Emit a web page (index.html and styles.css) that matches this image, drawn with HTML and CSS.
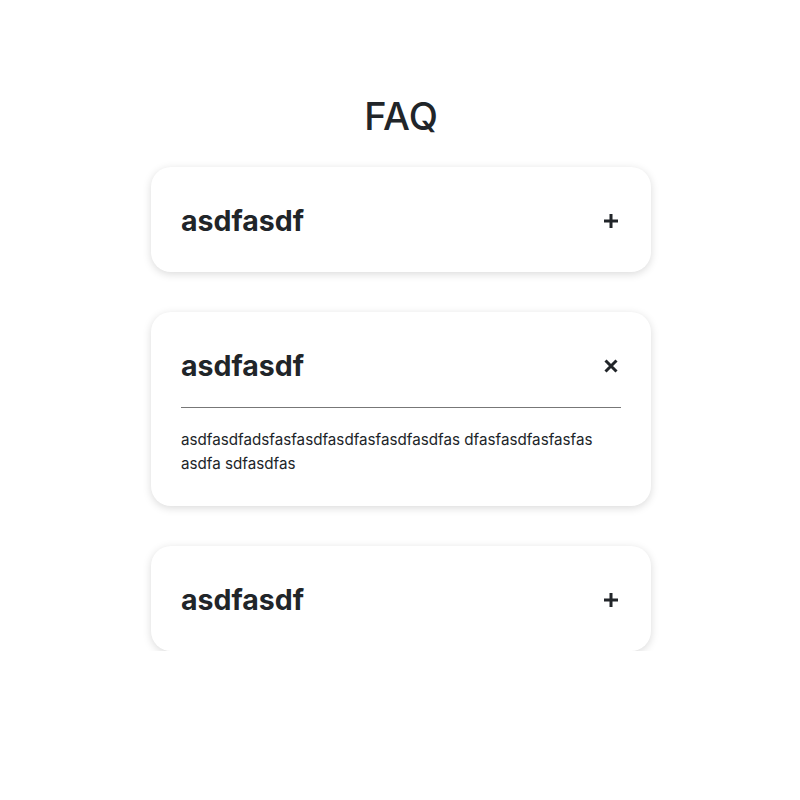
FILE: index.html
```html
<!DOCTYPE html>
<html lang="en">
<head>
<meta charset="utf-8">
<title>FAQ</title>
<link rel="stylesheet" href="styles.css">
</head>
<body>
<main class="faq">
  <h1 class="faq-title">FAQ</h1>
  <section class="card">
    <div class="card-head">
      <h2 class="card-question">asdfasdf</h2>
      <button class="toggle" aria-label="Open">
        <svg width="16" height="16" viewBox="0 0 16 16"><path d="M8 1v14M1 8h14" stroke="#212529" stroke-width="3" fill="none"/></svg>
      </button>
    </div>
  </section>
  <section class="card">
    <div class="card-head">
      <h2 class="card-question">asdfasdf</h2>
      <button class="toggle" aria-label="Close">
        <svg width="16" height="16" viewBox="0 0 16 16"><path d="M2.5 2.5l11 11M13.5 2.5l-11 11" stroke="#212529" stroke-width="3" fill="none"/></svg>
      </button>
    </div>
    <hr class="divider">
    <p class="answer">asdfasdfadsfasfasdfasdfasfasdfasdfas dfasfasdfasfasfas asdfa sdfasdfas</p>
  </section>
  <section class="card">
    <div class="card-head">
      <h2 class="card-question">asdfasdf</h2>
      <button class="toggle" aria-label="Open">
        <svg width="16" height="16" viewBox="0 0 16 16"><path d="M8 1v14M1 8h14" stroke="#212529" stroke-width="3" fill="none"/></svg>
      </button>
    </div>
  </section>
</main>
</body>
</html>
```

FILE: styles.css
```css
* { box-sizing: border-box; }
html, body { margin: 0; padding: 0; background: #fff; }
body {
  font-family: Inter, "Noto Sans", sans-serif;
  color: #212529;
  padding-left: 2px;
}
.faq {
  width: 500px;
  margin: 0 auto;
  padding-top: 92px;
  display: flex;
  flex-direction: column;
  gap: 40px;
}
.faq-title {
  margin: 0 0 -13px;
  text-align: center;
  font-size: 38px;
  font-weight: 500;
  line-height: 48px;
}
.card {
  background: #fff;
  border-radius: 20px;
  box-shadow: 0 2px 8px rgba(0, 0, 0, 0.15);
  padding: 32px 30px 29px;
}
.card-head {
  display: flex;
  align-items: center;
  justify-content: space-between;
  height: 44px;
}
.card-question {
  margin: 0;
  font-size: 28.5px;
  font-weight: 700;
  line-height: 44px;
}
.toggle {
  border: 0;
  background: none;
  padding: 0;
  width: 16px;
  height: 16px;
  margin-right: 2px;
  display: flex;
}
.divider {
  border: 0;
  border-top: 1px solid #777;
  margin: 19px 0 20px;
}
.answer {
  margin: 0 0 1px;
  font-size: 15.2px;
  line-height: 24px;
}
```
